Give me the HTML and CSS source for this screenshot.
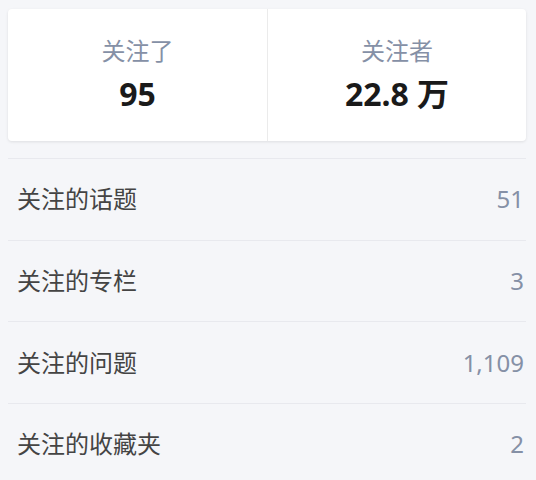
FILE: index.html
```html
<!DOCTYPE html>
<html lang="zh-CN">
<head>
<meta charset="utf-8">
<title>关注</title>
<link rel="stylesheet" href="styles.css">
</head>
<body>
<div class="page">
  <div class="card">
    <a class="stat">
      <div class="stat-label">关注了</div>
      <strong class="stat-value">95</strong>
    </a>
    <a class="stat">
      <div class="stat-label">关注者</div>
      <strong class="stat-value">22.8 万</strong>
    </a>
  </div>
  <div class="list">
    <a class="row"><span class="row-name">关注的话题</span><span class="row-count">51</span></a>
    <a class="row"><span class="row-name">关注的专栏</span><span class="row-count">3</span></a>
    <a class="row"><span class="row-name">关注的问题</span><span class="row-count">1,109</span></a>
    <a class="row"><span class="row-name">关注的收藏夹</span><span class="row-count">2</span></a>
  </div>
</div>
</body>
</html>
```
FILE: styles.css
```css
html, body {
  background: #f5f6f9;
}
body {
  margin: 0;
  padding: 9px 10px 0 8px;
  font-family: "Noto Sans", "Noto Sans CJK SC", sans-serif;
}
.page {
  width: 518px;
}
.card {
  display: grid;
  grid-template-columns: 1fr 1fr;
  background: #fff;
  border-radius: 4px;
  box-shadow: 0 1px 3px rgba(18, 18, 18, 0.1);
}
.stat {
  display: flex;
  flex-direction: column;
  align-items: center;
  padding: 24px 0 27px;
}
.stat + .stat {
  border-left: 1px solid #ebebeb;
}
.stat-label {
  font-size: 24px;
  line-height: 36px;
  color: #8590a6;
}
.stat-value {
  margin-top: 5px;
  font-size: 32px;
  line-height: 40px;
  font-weight: 700;
  color: #1a1a1a;
}
.list {
  margin-top: 17px;
}
.row {
  display: flex;
  justify-content: space-between;
  align-items: center;
  height: 81.67px;
  box-sizing: border-box;
  padding: 0 2px 0 9px;
  border-top: 1px solid #e8e9ee;
  font-size: 24px;
  line-height: 36px;
}
.row-name {
  color: #444;
}
.row-count {
  color: #8590a6;
}
```
